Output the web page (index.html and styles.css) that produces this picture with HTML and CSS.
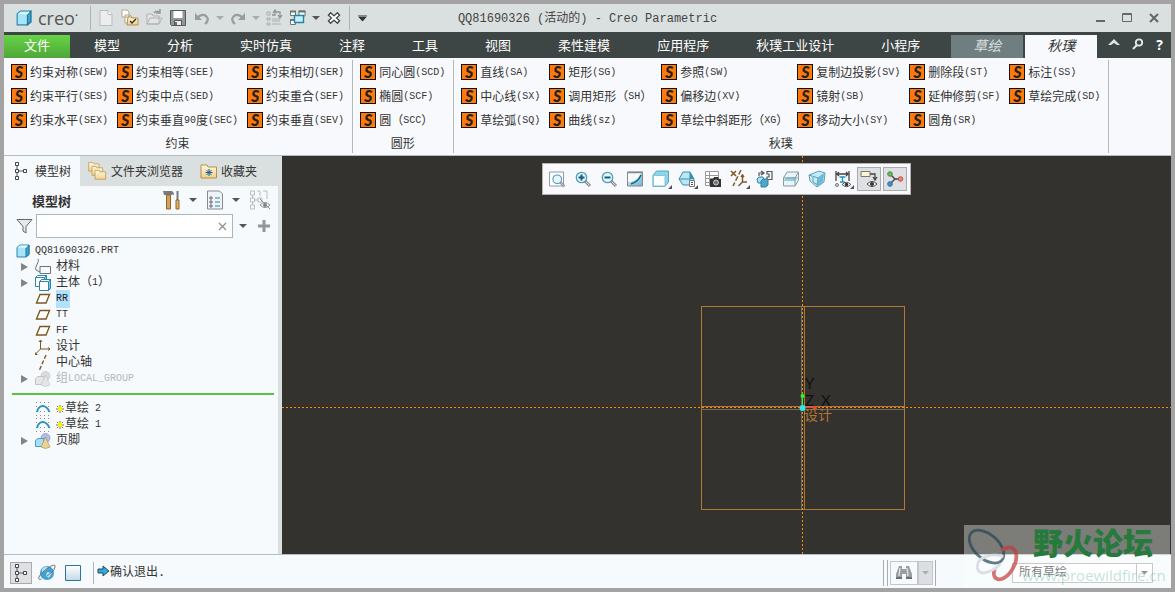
FILE: index.html
```html
<!DOCTYPE html>
<html lang="zh-CN">
<head>
  <meta charset="UTF-8" />
  <title>QQ81690326 (活动的) - Creo Parametric</title>
  <link rel="stylesheet" href="styles.css">
</head>
<body>
  <!-- shared icons -->
  <svg class="defs" aria-hidden="true">
    <defs>
      <linearGradient id="blue" x1="0" y1="0" x2="1" y2="1"><stop offset="0" stop-color="#d8f4fc"/><stop offset="1" stop-color="#6bb8d6"/></linearGradient>
      <linearGradient id="tan" x1="0" y1="0" x2="0" y2="1"><stop offset="0" stop-color="#fff8e4"/><stop offset="1" stop-color="#efd08c"/></linearGradient>
      <linearGradient id="pane" x1="0" y1="0" x2="0" y2="1"><stop offset="0" stop-color="#fff"/><stop offset="1" stop-color="#c3d9e6"/></linearGradient>
      <symbol id="cube" viewBox="0 0 14 14"><path d="M1 3.500 4 1h9v9.500L10 13H1z" fill="#a5e6fa" stroke="#2b86a8"/><path d="M10 4l3-3v9.500L10 13z" fill="#3fa3cc" stroke="#21789b"/><path d="M1.500 3.500 4 1.500h8L10 4z" fill="#d9f6ff"/></symbol>
      <symbol id="body" viewBox="0 0 12 12"><path d="M.5 2.500 2.500.5h9v8.500l-2 2.500h-9z" fill="#fff" stroke="#2b86a8"/><path d="M.5 2.500h9v9M9.500 2.500l2-2" fill="none" stroke="#2b86a8"/><path d="M9.500 2.500l2-2V9l-2 2.500z" fill="#7ccbe6" stroke="#2b86a8"/></symbol>
      <symbol id="tree" viewBox="0 0 14 18"><path d="M3 4v10M5 9h5" stroke="#555" fill="none"/><path d="M1.500 .5h3v3h-3zM1.500 7.500h3v3h-3zM1.500 14.500h3v3h-3zM9.500 7.500h3v3h-3z" fill="#fff" stroke="#444"/></symbol>
      <symbol id="plane" viewBox="0 0 16 16"><path d="M5 3.500h9.500L11 12H1.500z" fill="#fff" stroke="#7b5a22" stroke-width="1.400"/></symbol>
      <symbol id="sketch" viewBox="0 0 16 16"><path d="M1 1.500h14M1 5.500h14M1 10.500h14M1 14.500h14" stroke="#888" stroke-dasharray="1 3"/><path d="M2 11C4 3 11 3 14.500 11" fill="none" stroke="#2b93c4" stroke-width="1.800"/></symbol>
      <symbol id="group" viewBox="0 0 16 16"><circle cx="10.500" cy="5" r="4.500" fill="#b4bcee" stroke="#7f86bd" stroke-width=".6"/><path d="M.5 7.500 3 5.500h6v6l-2 2H.5z" fill="#a5e1f4" stroke="#4e9dba"/><path d="M10.500 4 6 14q4.500 3 9 0z" fill="#ecd294" stroke="#a4884b" stroke-width=".6"/></symbol>
      <symbol id="mark" viewBox="0 0 9 9"><path d="M4.500 0v9M0 4.500h9M1 1l7 7M8 1L1 8" stroke="#555" stroke-width="1"/><circle cx="4.500" cy="4.500" r="2.800" fill="#fff000"/></symbol>
      <symbol id="folder" viewBox="0 0 18 16"><path d="M1 3.500V2h6l1 2h8.500v11H1z" fill="url(#tan)" stroke="#b98f44"/></symbol>
      <symbol id="lens" viewBox="0 0 18 18"><path d="M11 11l5 5" stroke="#8c8c8c" stroke-width="3"/><path d="M11.500 11.500l4 4" stroke="#ddd"/><circle cx="7.500" cy="7.500" r="5.200" fill="#e6f8fd" stroke="#4c9cba" stroke-width="1.300"/></symbol>
      <symbol id="eye" viewBox="0 0 10 8"><path d="M0 4Q5-1 10 4 5 9 0 4z" fill="#fff" stroke="#444"/><circle cx="5" cy="4" r="2" fill="#333"/></symbol>
    </defs>
  </svg>

  <div class="window">
    <header class="titlebar">
      <div class="quick-access">
        <svg class="app-icon" width="16" height="16"><use href="#cube"/></svg>
        <span class="brand">creo<sup>•</sup></span>
        <span class="divider"></span>
        <button class="qa-btn" aria-label="新建"><svg width="18" height="18" viewBox="0 0 18 18"><path d="M3 1.500h8l4 4v11H3z" fill="#eceeee" stroke="#babdbd"/><path d="M11 1.500v4h4" fill="#fff" stroke="#babdbd"/></svg></button>
        <button class="qa-btn" aria-label="打开"><svg width="18" height="18" viewBox="0 0 18 18"><path d="M1 1h5l2 2v5H1zM4 6h5l2 2v6H4z" fill="#fff" stroke="#b5a58e"/><path d="M7 8h3l1 1h6v7H6z" fill="url(#tan)" stroke="#b98f44"/><path d="M9 12l2 2 4-4" fill="none" stroke="#333" stroke-width="1.400"/></svg></button>
        <button class="qa-btn" aria-label="打开文件"><svg width="18" height="18" viewBox="0 0 18 18"><path d="M2 15V5h5l1 2h6v8zM2 15l3-6h12l-3 6z" fill="#e3e5e4" stroke="#b0b3b2"/><path d="M9 4q2-3 6-1M15 0v4h-4" fill="none" stroke="#999" stroke-width="1.500"/></svg></button>
        <button class="qa-btn" aria-label="保存"><svg width="18" height="18" viewBox="0 0 18 18"><path d="M1.500 1.500h15v15h-14l-1-1z" fill="#929799" stroke="#555b5d"/><path d="M4.500 2h9v7h-9z" fill="#fff"/><path d="M5.500 11.500h7v5h-7z" fill="#eee" stroke="#555"/><path d="M7 13v3" stroke="#444" stroke-width="1.500"/></svg></button>
        <button class="qa-btn" aria-label="撤消"><svg width="18" height="18" viewBox="0 0 18 18"><path d="M4 9q5-5 9-2 4 4-1 8" fill="none" stroke="#999c9c" stroke-width="2.200"/><path d="M2 4v7h7z" fill="#999c9c"/></svg></button>
        <span class="caret light"></span>
        <button class="qa-btn" aria-label="重做"><svg width="18" height="18" viewBox="0 0 18 18"><path d="M14 9q-5-5-9-2-4 4 1 8" fill="none" stroke="#999c9c" stroke-width="2.200"/><path d="M16 4v7H9z" fill="#999c9c"/></svg></button>
        <span class="caret light"></span>
        <button class="qa-btn" aria-label="重新生成"><svg width="18" height="18" viewBox="0 0 18 18"><path d="M2 3h3v3H2zM2 9h3v2H2zM2 14h3v2H2zM7 10h8M7 12h8M7 15h9" fill="none" stroke="#a9adac"/><path d="M7 6h3V2M8 4l2-3 2 3M12 3h3v5M13 6l2 3 2-3" fill="none" stroke="#919594" stroke-width="1.300"/></svg></button>
        <button class="qa-btn" aria-label="窗口"><svg width="18" height="18" viewBox="0 0 18 18"><path d="M1.500 2.500h5v4h-5zM10 2h6v5h-6zM1.500 10.500h5v5h-5z" fill="#fff" stroke="#6f7475"/><path d="M1 2.500h6M9.500 2.500h7M1 11h5" stroke="#6f7475" stroke-width="2"/><path d="M5.500 6.500h9v7h-9z" fill="#cceffb" stroke="#2184ad" stroke-width="1.400"/></svg></button>
        <span class="caret"></span>
        <button class="qa-btn" aria-label="关闭"><svg width="18" height="18" viewBox="0 0 18 18"><path d="M4 4.500l10 9M14 4.500l-10 9" stroke="#444" stroke-width="4.400"/><path d="M5 5.500l8 7M13 5.500l-8 7" stroke="#fff" stroke-width="2"/></svg></button>
        <span class="divider"></span>
        <span class="caret bar"></span>
      </div>
      <div class="title">QQ81690326 (活动的) - Creo Parametric</div>
      <div class="window-controls">
        <button aria-label="最小化"><svg width="12" height="12" viewBox="0 0 12 12"><path d="M2 9h9" stroke="#666" stroke-width="2"/></svg></button>
        <button aria-label="最大化"><svg width="12" height="12" viewBox="0 0 12 12"><path d="M1.500 1.500h9v8h-9zM1 2.500h10" fill="none" stroke="#666"/></svg></button>
        <button aria-label="关闭窗口"><svg width="12" height="12" viewBox="0 0 12 12"><path d="M2 2l8 8M10 2l-8 8" stroke="#666" stroke-width="2"/></svg></button>
      </div>
    </header>

    <nav class="tabs">
      <button class="tab file">文件</button>
      <button class="tab">模型</button>
      <button class="tab">分析</button>
      <button class="tab">实时仿真</button>
      <button class="tab">注释</button>
      <button class="tab">工具</button>
      <button class="tab">视图</button>
      <button class="tab">柔性建模</button>
      <button class="tab">应用程序</button>
      <button class="tab">秋璞工业设计</button>
      <button class="tab">小程序</button>
      <button class="tab context">草绘</button>
      <button class="tab active">秋璞</button>
      <div class="tab-tools">
        <button aria-label="折叠功能区"><svg width="12" height="12" viewBox="0 0 12 12"><path d="M0 7l6-6 6 6H9L6 5 3 7z" fill="#dfe3e3"/></svg></button>
        <button aria-label="搜索"><svg width="12" height="12" viewBox="0 0 12 12"><circle cx="7" cy="4.500" r="3.200" fill="none" stroke="#e4e8e8" stroke-width="1.800"/><path d="M5 7l-4 4" stroke="#e4e8e8" stroke-width="2"/></svg></button>
        <button aria-label="帮助">?</button>
      </div>
    </nav>

    <section class="ribbon">
      <div class="group">
        <div class="commands">
          <button class="cmd"><i>S</i>约束对称<span>(SEW)</span></button>
          <button class="cmd"><i>S</i>约束平行<span>(SES)</span></button>
          <button class="cmd"><i>S</i>约束水平<span>(SEX)</span></button>
          <button class="cmd"><i>S</i>约束相等<span>(SEE)</span></button>
          <button class="cmd"><i>S</i>约束中点<span>(SED)</span></button>
          <button class="cmd"><i>S</i>约束垂直<span>90</span>度<span>(SEC)</span></button>
          <button class="cmd"><i>S</i>约束相切<span>(SER)</span></button>
          <button class="cmd"><i>S</i>约束重合<span>(SEF)</span></button>
          <button class="cmd"><i>S</i>约束垂直<span>(SEV)</span></button>
        </div>
        <div class="group-name">约束</div>
      </div>
      <div class="group">
        <div class="commands">
          <button class="cmd"><i>S</i>同心圆<span>(SCD)</span></button>
          <button class="cmd"><i>S</i>椭圆<span>(SCF)</span></button>
          <button class="cmd"><i>S</i>圆（<span>SCC</span>）</button>
        </div>
        <div class="group-name">圆形</div>
      </div>
      <div class="group">
        <div class="commands">
          <button class="cmd"><i>S</i>直线<span>(SA)</span></button>
          <button class="cmd"><i>S</i>中心线<span>(SX)</span></button>
          <button class="cmd"><i>S</i>草绘弧<span>(SQ)</span></button>
          <button class="cmd"><i>S</i>矩形<span>(SG)</span></button>
          <button class="cmd"><i>S</i>调用矩形（<span>SH</span>）</button>
          <button class="cmd"><i>S</i>曲线<span>(sz)</span></button>
          <button class="cmd"><i>S</i>参照<span>(SW)</span></button>
          <button class="cmd"><i>S</i>偏移边<span>(XV)</span></button>
          <button class="cmd"><i>S</i>草绘中斜距形（<span>XG</span>）</button>
          <button class="cmd"><i>S</i>复制边投影<span>(SV)</span></button>
          <button class="cmd"><i>S</i>镜射<span>(SB)</span></button>
          <button class="cmd"><i>S</i>移动大小<span>(SY)</span></button>
          <button class="cmd"><i>S</i>删除段<span>(ST)</span></button>
          <button class="cmd"><i>S</i>延伸修剪<span>(SF)</span></button>
          <button class="cmd"><i>S</i>圆角<span>(SR)</span></button>
          <button class="cmd"><i>S</i>标注<span>(SS)</span></button>
          <button class="cmd"><i>S</i>草绘完成<span>(SD)</span></button>
        </div>
        <div class="group-name">秋璞</div>
      </div>
    </section>

    <main class="workspace">
      <aside class="navigator">
        <div class="nav-tabs">
          <button class="nav-tab active"><svg width="14" height="18"><use href="#tree"/></svg>模型树</button>
          <button class="nav-tab"><svg width="20" height="20" viewBox="0 0 20 20"><use href="#folder" width="12" height="11"/><use href="#folder" x="3" y="4" width="13" height="11"/><use href="#folder" x="6" y="8" width="13" height="11"/></svg>文件夹浏览器</button>
          <button class="nav-tab fav"><svg width="18" height="16" viewBox="0 0 18 16"><use href="#folder"/><path d="M9 6v7M5.500 9.500h7M6.500 7l5 5M11.500 7l-5 5" stroke="#17618a"/></svg>收藏夹</button>
        </div>
        <div class="nav-head">
          <h2>模型树</h2>
          <button class="nav-btn" aria-label="设置"><svg width="18" height="20" viewBox="0 0 18 20"><path d="M0 1h9q2 1 2 4Q9 4 8 5H1z" fill="#777b7c"/><path d="M3.500 5h4v14h-4z" fill="#d2a459" stroke="#8d662a"/><path d="M14.500 1v9" stroke="#777b7c" stroke-width="2"/><path d="M13 10h3v9h-3z" fill="#e1b263" stroke="#8d662a"/></svg></button>
          <span class="caret"></span>
          <button class="nav-btn" aria-label="显示"><svg width="18" height="20" viewBox="0 0 18 20"><path d="M1.500 1h12l3 3v15h-15z" fill="#eef3f5" stroke="#858b8c"/><path d="M4 7h2v2H4zM4 11h2v2H4zM4 15h2v2H4z" fill="#fff" stroke="#667"/><path d="M9 8h5M9 12h5M9 16h5" stroke="#3a7ea2"/></svg></button>
          <span class="caret"></span>
          <button class="nav-btn" aria-label="显示隐藏"><svg width="22" height="20" viewBox="0 0 22 20"><path d="M1.500 1h4v4h-4zM1.500 8h4v4h-4zM1.500 15h4v4h-4zM9 8h4v4H9zM3.500 5v3M3.500 12v3M6 10h3M8 1h3v5M14 1h4v8" fill="none" stroke="#b8bcbd"/><g opacity=".6"><use href="#eye" x="11" y="11" width="10" height="8"/></g><path d="M11 9l10 10" stroke="#888"/></svg></button>
        </div>
        <div class="filter">
          <svg width="17" height="16" viewBox="0 0 17 16"><path d="M1 1.500h15L10 8.500V15l-3-2V8.500z" fill="#e6e9ea" stroke="#62686a"/></svg>
          <div class="filter-box">
            <input type="text" aria-label="筛选模型树">
            <button aria-label="清除"><svg width="9" height="9" viewBox="0 0 9 9"><path d="M1 1l7 7M8 1l-7 7" stroke="#8c9090" stroke-width="1.300"/></svg></button>
          </div>
          <span class="caret"></span>
          <button class="add" aria-label="添加"><svg width="12" height="12" viewBox="0 0 12 12"><path d="M6 0v12M0 6h12" stroke="#929696" stroke-width="3"/></svg></button>
        </div>
        <ul class="tree">
          <li class="root"><svg width="14" height="14"><use href="#cube"/></svg><span class="code">QQ81690326.PRT</span></li>
          <li class="parent"><svg width="16" height="16" viewBox="0 0 16 16"><path d="M3 0C5 3-1 8 1 11l4 2M5 7.500h10.500v7H5z" fill="none" stroke="#6d7172"/></svg>材料</li>
          <li class="parent"><svg width="16" height="16" viewBox="0 0 16 16"><use href="#body" width="12" height="12"/><use href="#body" x="4" y="4" width="12" height="12"/></svg>主体（<span class="code">1</span>）</li>
          <li><svg width="16" height="16"><use href="#plane"/></svg><mark class="code">RR</mark></li>
          <li><svg width="16" height="16"><use href="#plane"/></svg><span class="code">TT</span></li>
          <li><svg width="16" height="16"><use href="#plane"/></svg><span class="code">FF</span></li>
          <li><svg width="16" height="16" viewBox="0 0 16 16"><path d="M5.500 1v9H15M5.500 10L1 14.500M4 3l1.500-2L7 3M13 8.500l2 1.500-2 1.500" fill="none" stroke="#7b5a22"/><path d="M0 13v3h3z" fill="#7b5a22"/></svg>设计</li>
          <li><svg width="16" height="16" viewBox="0 0 16 16"><path d="M11 0L4 16" stroke="#7b5a22" stroke-width="1.400" stroke-dasharray="4 2"/></svg>中心轴</li>
          <li class="parent muted"><svg width="16" height="16"><use href="#group"/></svg>组<span class="code">LOCAL_GROUP</span></li>
          <li class="insert-here" aria-label="在此插入"></li>
          <li><svg width="16" height="16"><use href="#sketch"/></svg><svg class="mark" width="8" height="8"><use href="#mark"/></svg>草绘<span class="code number">2</span></li>
          <li><svg width="16" height="16"><use href="#sketch"/></svg><svg class="mark" width="8" height="8"><use href="#mark"/></svg>草绘<span class="code number">1</span></li>
          <li class="parent"><svg width="16" height="16"><use href="#group"/></svg>页脚</li>
        </ul>
      </aside>

      <section class="viewport">
        <svg class="model" viewBox="0 0 889 398" preserveAspectRatio="xMidYMid slice">
          <g fill="none" stroke="#b07832">
            <rect x="419.500" y="150.500" width="203" height="203"/>
            <path d="M522.500 150v203M419 250.500h203"/>
            <path d="M519.500 150v203M419 253.500h203" stroke="#736a5c"/>
          </g>
          <path d="M520.500 0v398M0 251.500h889" stroke="#ff8c00" stroke-dasharray="2 2"/>
          <path d="M520.500 251v-11" stroke="#2dfa1e"/>
          <path d="M521 251.500h12" stroke="#f44336"/>
          <circle cx="520.500" cy="240" r="2" fill="#2dfa1e"/>
          <circle cx="533" cy="252" r="2" fill="#f44336"/>
          <circle cx="520.500" cy="252" r="3" fill="#2de6f0"/>
          <text class="axis" x="523" y="233">Y</text>
          <text class="axis" x="523" y="250">Z</text>
          <text class="axis" x="539" y="250">X</text>
          <text class="csys" x="522" y="264">设计</text>
        </svg>
        <div class="view-toolbar">
          <button aria-label="重新调整"><svg width="18" height="18" viewBox="0 0 18 18"><path d="M1.500 2h14v14h-14z" fill="#fff" stroke="#999"/><use href="#lens" x="3" y="3" width="15" height="15"/></svg></button>
          <button aria-label="放大"><svg width="18" height="18" viewBox="0 0 18 18"><use href="#lens"/><path d="M7.500 4.500v6M4.500 7.500h6" stroke="#17597a" stroke-width="2"/></svg></button>
          <button aria-label="缩小"><svg width="18" height="18" viewBox="0 0 18 18"><use href="#lens"/><path d="M4.500 7.500h6" stroke="#17597a" stroke-width="2"/></svg></button>
          <button aria-label="重画"><svg width="18" height="18" viewBox="0 0 18 18"><path d="M1.500 2h15v14h-15z" fill="url(#blue)" stroke="#888"/><path d="M2 3h13Q12 11 4 12H2z" fill="#f4fbfd"/><path d="M15 5Q12 12 5 14" fill="none" stroke="#205f7c" stroke-width="1.500"/><path d="M1 2.500h16" stroke="#888" stroke-width="1.500"/></svg></button>
          <button class="more" aria-label="显示样式"><svg width="18" height="18" viewBox="0 0 18 18"><path d="M1 5.500 4.500 1h12v11L13 16.500H1z" fill="#8ed5ec" stroke="#58a5c0"/><path d="M1.500 5.500H13v10.500H1.500z" fill="#fff" stroke="#89c4d8"/></svg></button>
          <button class="more" aria-label="已保存方向"><svg width="18" height="18" viewBox="0 0 18 18"><path d="M1 9l4-7h7l4 7-4 6H5z" fill="#b8e8f6" stroke="#3e8ba9"/><path d="M1 9h11M12 2v8" stroke="#3e8ba9"/><path d="M12 2l4 7h-4z" fill="#368db0"/><path d="M11.500 10.500h5v6h-5z" fill="#fff" stroke="#777"/><path d="M13 12.500h2M13 14.500h2" stroke="#555"/></svg></button>
          <button aria-label="视图管理器"><svg width="18" height="18" viewBox="0 0 18 18"><path d="M1.500 1.500h13v14h-13zM1 5.500h13M1 8.500h13M1 12.500h13M5.500 1v14" fill="#fff" stroke="#999"/><path d="M6 9h3l1-2h4l1 2h2v8H6z" fill="#333"/><circle cx="12" cy="12.500" r="2.500" fill="#777" stroke="#ccc"/></svg></button>
          <button class="more" aria-label="基准显示"><svg width="18" height="18" viewBox="0 0 18 18"><path d="M1 1l5 5M6 1L1 6" stroke="#7b5a22" stroke-width="1.500"/><path d="M11 0L3 16" stroke="#7b5a22" stroke-width="1.500" stroke-dasharray="5 2"/><path d="M12.500 5v7H17M12.500 12l-4 4M11 7l1.500-2L14 7" fill="none" stroke="#7b5a22" stroke-width="1.400"/></svg></button>
          <button aria-label="模型方向"><svg width="18" height="18" viewBox="0 0 18 18"><path d="M3 6V3h4M5 1l3 2-3 2M11 1.500h5v8h-5V7h2V4h-2z" fill="none" stroke="#555" stroke-width="1.200"/><path d="M1 9l2-2h4l1 4-1 2H2z" fill="#a9dff0" stroke="#347f9e"/><path d="M5 11l2-2h5v6l-2 2H5z" fill="#4ba7cb" stroke="#347f9e"/></svg></button>
          <button aria-label="透明"><svg width="18" height="18" viewBox="0 0 18 18"><path d="M1.500 8 5 2h11.500v8L13 16H1.500z" fill="#e9f4f8" stroke="#8d999e"/><path d="M1.500 11 5 7h11.500L13 11z" fill="#8fd0e5"/><path d="M1.500 8H13l3.500-6M13 8v8" fill="none" stroke="#8d999e"/></svg></button>
          <button aria-label="透视图"><svg width="18" height="18" viewBox="0 0 18 18"><path d="M1 5l10-4 6 2-1 9-7 5-7-6z" fill="#c5eaf5" stroke="#5fa3bb"/><path d="M1 5l9 3 7-5M10 8L9 17M5 7v5l5 3" fill="none" stroke="#5fa3bb"/><path d="M10 8l6-4-1 8-5 4z" fill="#6bbcd9"/></svg></button>
          <button class="more" aria-label="注释显示"><svg width="18" height="18" viewBox="0 0 18 18"><path d="M2 1v10M15 1v10M3 4h11M5 2L3 4l2 2M12 2l2 2-2 2" fill="none" stroke="#444" stroke-width="1.300"/><path d="M5.500 7h6M8.500 7v5M6 12h5" stroke="#2393bd" stroke-width="1.300"/><circle cx="3" cy="15" r="1.500" fill="#ddd" stroke="#777"/><use href="#eye" x="8" y="11" width="9" height="7"/></svg></button>
          <button class="pressed" aria-label="注释"><svg width="18" height="18" viewBox="0 0 18 18"><path d="M1 1.500h9v5H1z" fill="#fff5cc" stroke="#777"/><path d="M10 4h5v5M13 7l2 3 2-3" fill="none" stroke="#444" stroke-width="1.300"/><use href="#eye" x="7" y="10" width="10" height="8"/></svg></button>
          <button class="pressed" aria-label="旋转中心"><svg width="18" height="18" viewBox="0 0 18 18"><path d="M4 4l5 5h5M9 9l-5 5" fill="none" stroke="#444" stroke-width="1.400"/><circle cx="4" cy="4" r="2.300" fill="#6cbb62" stroke="#4a8c43"/><circle cx="14.500" cy="9" r="2.300" fill="#f08274" stroke="#bb5648"/><circle cx="4" cy="14" r="2.300" fill="#4994c5" stroke="#2c6d99"/></svg></button>
        </div>
      </section>
    </main>

    <footer class="statusbar">
      <button class="status-btn pressed" aria-label="导航器"><svg width="14" height="18"><use href="#tree"/></svg></button>
      <button class="status-btn" aria-label="浏览器"><svg width="18" height="18" viewBox="0 0 18 18"><circle cx="9" cy="9" r="7" fill="#419fd2"/><path d="M4 5q3-3 6-2l-2 3-4 3zM9 8l5 1-3 5-3-2z" fill="#b6e2f2"/><path d="M3.500 15C-1 17 0 12 6 7s12-8 11-4-4 6-8 9" fill="none" stroke="#6a7377"/></svg></button>
      <button class="status-btn" aria-label="全屏"><svg width="18" height="18" viewBox="0 0 18 18"><path d="M1.500 1.500h15v15h-15z" fill="url(#pane)" stroke="#2b7595"/></svg></button>
      <div class="message"><svg width="13" height="12" viewBox="0 0 13 12"><path d="M1 4h5V1l6 5-6 5V8H1z" fill="#3ba5d4" stroke="#174f69"/></svg>确认退出.</div>
      <div class="find">
        <button aria-label="查找"><svg width="18" height="16" viewBox="0 0 18 16"><path d="M4 1h3v3h4V1h3l3 8v5h-6V9H7v5H1V9z" fill="#999d9f"/><path d="M5 3L4 11M12 3l1 8" stroke="#ddd" stroke-width="1.500"/><path d="M1 13h6M11 13h6" stroke="#6c7072" stroke-width="2"/></svg></button>
        <button class="find-menu" aria-label="查找选项"><span class="caret light"></span></button>
      </div>
      <div class="select-filter">
        <select aria-label="选择过滤器"><option>所有草绘</option></select>
        <span class="select-arrow"><span class="caret"></span></span>
      </div>
    </footer>

    <div class="watermark">
      <svg width="60" height="60" viewBox="0 0 60 60" fill="none">
        <ellipse cx="22" cy="21" rx="22" ry="13" transform="rotate(42 22 21)" stroke="#244556" stroke-width="3"/>
        <path d="M38 25q10-7 15 1c4 11-6 28-16 30-6 1-9-5-6-11" stroke="#c5383b" stroke-width="4"/>
        <path d="M40 32c-8-4-27-2-28 10 0 12 15 7 25-2" stroke="#ccd2df" stroke-width="3"/>
      </svg>
      <div class="watermark-text">
        <strong>野火论坛</strong>
        <span>www.proewildfire.cn</span>
      </div>
    </div>
  </div>
</body>
</html>
```
FILE: styles.css
```css
* {
  box-sizing: border-box;
}

body {
  margin: 0;
  height: 100vh;
  background: #a3a3a3;
  font-family: "Liberation Mono", "Noto Sans CJK SC", monospace;
  font-size: 12px;
  color: #333;
}

button {
  font: inherit;
  color: inherit;
  background: none;
  border: none;
  padding: 0;
  cursor: pointer;
}

svg {
  flex: none;
  display: block;
}

.defs {
  position: absolute;
  width: 0;
  height: 0;
}

.window {
  position: relative;
  display: flex;
  flex-direction: column;
  height: 100vh;
  border: 4px solid #a3a3a3;
  background: #f8f9fc;
}

.caret {
  flex: none;
  width: 8px;
  height: 4px;
  background: #555;
  clip-path: polygon(0 0, 100% 0, 50% 100%);
}

.caret.light {
  background: #a8acac;
}

.caret.bar {
  height: 7px;
  width: 9px;
  background: #333;
  clip-path: polygon(0 0, 100% 0, 100% 1px, 0 1px, 0 2px, 100% 2px, 50% 100%, 0 2px);
}

/* title bar */
.titlebar {
  display: grid;
  grid-template-columns: 1fr auto 1fr;
  align-items: center;
  height: 28px;
  background: #dae0df;
}

.quick-access {
  display: flex;
  align-items: center;
  gap: 6px;
  padding-left: 12px;
}

.brand {
  width: 46px;
  font-family: "Open Sans", sans-serif;
  font-size: 18px;
  line-height: 24px;
  color: #555;
}

.brand sup {
  font-size: 8px;
  line-height: 0;
}

.divider {
  width: 1px;
  height: 24px;
  background: #aeb4b4;
}

.quick-access .caret {
  margin: 0 -1px;
}

.quick-access .caret.bar {
  margin-left: 2px;
}

.title {
  color: #444;
  white-space: nowrap;
  padding-bottom: 2px;
}

.window-controls {
  display: flex;
  justify-content: flex-end;
  gap: 15px;
  padding-right: 11px;
}

/* ribbon tabs */
.tabs {
  display: flex;
  align-items: flex-end;
  gap: 1px;
  height: 26px;
  background: #3e4545;
  color: #fff;
  font-size: 13px;
}

.tab {
  height: 23px;
  padding: 0 23px;
  line-height: 22px;
  white-space: nowrap;
}

.tab.file {
  padding: 0 20px;
  background: linear-gradient(#66d444, #4fa639);
}

.tab.context {
  margin: 0 1px 0 7px;
  background: #6f7e80;
  color: #d8dfdf;
  font-style: italic;
  font-size: 14px;
  padding: 0 22px;
}

.tab.active {
  background: #f8f9fc;
  color: #333;
  font-style: italic;
  font-size: 14px;
  padding: 0 22px;
}

.tab-tools {
  display: flex;
  align-items: center;
  gap: 12px;
  height: 26px;
  padding: 0 8px 2px 8px;
  margin-left: auto;
  font-family: "Open Sans", sans-serif;
  font-size: 14px;
  font-weight: bold;
}

/* ribbon */
.ribbon {
  display: flex;
  height: 98px;
  padding-top: 2px;
  border-bottom: 1px solid #b0bfc1;
}

.group {
  display: flex;
  flex-direction: column;
  padding: 0 8px 0 7px;
  border-right: 1px solid #b4b8ba;
  margin-bottom: 2px;
}

.commands {
  display: grid;
  grid-template-rows: repeat(3, 24px);
  grid-auto-flow: column;
  column-gap: 9px;
}

.cmd {
  display: flex;
  align-items: center;
  white-space: nowrap;
}

.cmd span,
.code {
  font-size: 10px;
}

.cmd i {
  width: 16px;
  height: 16px;
  margin-right: 3px;
  border: 1px solid #111;
  background: #ff7a0a;
  color: #222;
  font: italic 900 16px/14px Lato, sans-serif;
  text-align: center;
}

.group-name {
  padding-top: 3px;
  text-align: center;
  line-height: 20px;
}

/* workspace */
.workspace {
  flex: 1;
  display: flex;
  min-height: 0;
}

.navigator {
  width: 278px;
  background: #f7fafc;
  border-right: 4px solid #dae0df;
}

.nav-tabs {
  display: flex;
  height: 30px;
  background: #dae0df;
}

.nav-tab {
  display: flex;
  align-items: center;
  gap: 3px;
  padding: 0 9px 0 8px;
}

.nav-tab.active {
  gap: 7px;
  padding-left: 10px;
  background: #f7fafc;
}

.nav-head {
  display: flex;
  align-items: center;
  gap: 8px;
  height: 28px;
  padding: 0 7px 0 28px;
}

.nav-head h2 {
  flex: 1;
  margin: 0;
  font-size: 13px;
}

.nav-head .caret {
  margin-right: 1px;
}

.filter {
  display: flex;
  align-items: center;
  gap: 6px;
  height: 24px;
  padding: 0 11px 0 12px;
}

.filter > svg {
  margin-right: -3px;
}

.filter-box {
  flex: 1;
  display: flex;
  align-items: center;
  height: 24px;
  padding-right: 5px;
  border: 1px solid #a8b7b9;
  background: #fff;
}

.filter-box input {
  flex: 1;
  min-width: 0;
  border: none;
  outline: none;
}

.add {
  margin-left: 5px;
}

.tree {
  list-style: none;
  margin: 0;
  padding: 5px 4px 0 8px;
}

.tree li {
  display: flex;
  align-items: center;
  height: 16px;
  padding-left: 23px;
  line-height: 18px;
}

.tree li svg {
  margin-right: 5px;
}

.tree li .mark {
  margin-right: 1px;
}

.tree .root {
  padding-left: 4px;
}

.tree .parent::before {
  content: "";
  width: 7px;
  height: 8px;
  margin: 0 7px 0 -14px;
  background: #808485;
  clip-path: polygon(0 0, 100% 50%, 0 100%);
}

.tree mark {
  background: #b1e2fd;
  color: #222;
  padding-right: 2px;
}

.tree .muted {
  color: #b5b8ba;
}

.muted svg {
  filter: grayscale(1);
  opacity: 0.5;
}

.tree .number {
  margin-left: 6px;
}

.tree .insert-here {
  height: 2px;
  margin: 6px 0;
  background: #5cc13f;
}

/* graphics area */
.viewport {
  position: relative;
  flex: 1;
  background: #33322e;
  text-align: center;
}

.model {
  position: absolute;
  inset: 0;
  width: 100%;
  height: 100%;
}

.axis {
  font: 15px Lato, sans-serif;
  fill: #111;
}

.csys {
  font-size: 14px;
  fill: #b07832;
}

.view-toolbar {
  position: relative;
  display: inline-flex;
  gap: 2px;
  margin-top: 7px;
  padding: 3px 3px 3px 2px;
  border: 1px solid #b3b3b1;
  background: #f8f9fc;
}

.view-toolbar button {
  position: relative;
  display: grid;
  place-items: center;
  width: 24px;
  height: 24px;
  border: 1px solid transparent;
}

.view-toolbar .pressed,
.status-btn.pressed {
  border: 1px solid #a9abae;
  background: #dfe0e3;
}

.view-toolbar .more::after {
  content: "";
  position: absolute;
  right: 0;
  bottom: 1px;
  border: 2px solid #555;
  border-top-color: transparent;
  border-left-color: transparent;
}

/* status bar */
.statusbar {
  display: flex;
  align-items: center;
  height: 34px;
  padding: 2px 18px 0 6px;
  border-top: 1px solid #b0bfc1;
  background: #f6fafc;
}

.status-btn {
  display: grid;
  place-items: center;
  width: 22px;
  height: 22px;
  margin-right: 4px;
}

.message {
  flex: 1;
  display: flex;
  align-items: center;
  height: 22px;
  margin-left: 5px;
  padding: 0 0 4px 3px;
  border-left: 1px solid #b0b5b8;
}

.find {
  display: flex;
  height: 26px;
  margin-right: 76px;
  padding: 1px 2px 1px 3px;
  border-left: 1px solid #a8adb0;
  border-right: 1px solid #a8adb0;
}

.find::before {
  content: "";
  width: 1px;
  margin: -1px 0 -1px -8px;
  background: #a8adb0;
}

.find button {
  width: 28px;
  display: grid;
  place-items: center;
  border: 1px solid #c3c7ca;
}

.find button:first-of-type {
  margin-left: 6px;
}

.find .find-menu {
  width: 15px;
  background: #dcdee1;
}

.select-filter {
  display: flex;
  width: 141px;
  height: 20px;
  border: 1px solid #a9abae;
  background: #fff;
}

.select-filter select {
  flex: 1;
  appearance: none;
  border: none;
  padding: 0 6px;
  background: none;
  font: inherit;
  color: #333;
}

.select-arrow {
  display: grid;
  place-items: center;
  width: 16px;
  border-left: 1px solid #a9abae;
}

/* forum stamp over the lower right corner */
.watermark {
  position: absolute;
  right: 1px;
  bottom: 0;
  display: flex;
  width: 206px;
  height: 63px;
  background: rgba(255, 255, 255, 0.36);
  pointer-events: none;
}

.watermark svg {
  padding: 2px;
  opacity: 0.7;
}

.watermark-text {
  display: flex;
  flex-direction: column;
  margin-left: -2px;
}

.watermark strong {
  padding-left: 11px;
  font-size: 30px;
  line-height: 42px;
  font-weight: 900;
  color: #257a3c;
}

.watermark span {
  font-family: "Open Sans", sans-serif;
  font-size: 15px;
  line-height: 16px;
  color: rgba(70, 170, 150, 0.35);
}
```
